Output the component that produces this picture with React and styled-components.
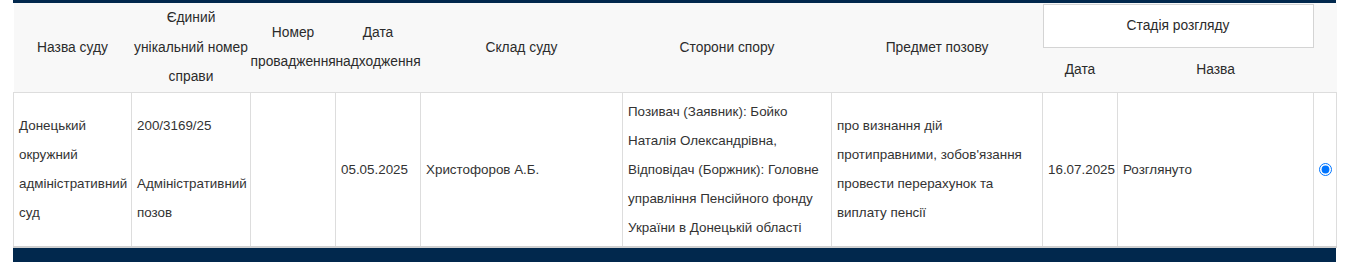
import React from "react";
import styled, { createGlobalStyle } from "styled-components";

const GlobalStyle = createGlobalStyle`
  html, body {
    margin: 0;
    padding: 0;
    background: #fff;
  }
  body {
    font-family: "Liberation Sans", Arial, Helvetica, sans-serif;
    font-size: 13.4px;
    color: #333;
  }
`;

const NAVY = "#01284d";

const Page = styled.div`
  padding: 0 24px 0 13px;
`;

const Panel = styled.div`
  width: 1323px;
  border-top: 3px solid ${NAVY};
`;

const Table = styled.table`
  width: 100%;
  table-layout: fixed;
  border-collapse: collapse;
  border-spacing: 0;
`;

const Head = styled.thead`
  background: #f8f8f8;
`;

const HeadRow = styled.tr`
  height: 44px;
`;

const Th = styled.th`
  font-weight: normal;
  font-size: 13.8px;
  color: #2b2b2b;
  text-align: center;
  vertical-align: middle;
  line-height: 29.5px;
  padding: 0;
  white-space: ${(p) => (p.$nowrap ? "nowrap" : "normal")};
  border-bottom: ${(p) => (p.$last ? "1px solid #ddd" : "none")};
`;

const StageBox = styled.div`
  margin-top: 1px;
  height: 44px;
  box-sizing: border-box;
  background: #fff;
  border: 1px solid #d4d4d4;
  line-height: 42px;
`;

const BodyRow = styled.tr`
  background: #fff;
`;

const Td = styled.td`
  border: 1px solid #ddd;
  border-bottom: 2px solid #d0d0d0;
  padding: ${(p) => (p.$center ? "4px 0" : "4px 3px 4px 5px")};
  line-height: 29px;
  vertical-align: middle;
  text-align: ${(p) => (p.$center ? "center" : "left")};
  white-space: ${(p) => (p.$nowrap ? "nowrap" : "normal")};
  color: #333;
`;

const Radio = styled.input`
  margin: 0;
  width: 13px;
  height: 13px;
  vertical-align: middle;
`;

const Footer = styled.div`
  height: 40px;
  background: ${NAVY};
`;

const widths = [118, 119, 85, 85, 202, 209, 211, 75, 196, 23];

export default function App() {
  return (
    <Page>
      <GlobalStyle />
      <Panel>
        <Table>
          <colgroup>
            {widths.map((w, i) => (
              <col key={i} style={{ width: w }} />
            ))}
          </colgroup>
          <Head>
            <HeadRow>
              <Th rowSpan={2} $last>Назва суду</Th>
              <Th rowSpan={2} $last>
                Єдиний
                <br />
                унікальний номер
                <br />
                справи
              </Th>
              <Th rowSpan={2} $last $nowrap>
                Номер
                <br />
                провадження
              </Th>
              <Th rowSpan={2} $last $nowrap>
                Дата
                <br />
                надходження
              </Th>
              <Th rowSpan={2} $last>Склад суду</Th>
              <Th rowSpan={2} $last>Сторони спору</Th>
              <Th rowSpan={2} $last>Предмет позову</Th>
              <Th colSpan={2}>
                <StageBox>Стадія розгляду</StageBox>
              </Th>
              <Th rowSpan={2} $last></Th>
            </HeadRow>
            <HeadRow>
              <Th $last>Дата</Th>
              <Th $last>Назва</Th>
            </HeadRow>
          </Head>
          <tbody>
            <BodyRow>
              <Td>Донецький окружний адміністративний суд</Td>
              <Td>
                200/3169/25
                <br />
                <br />
                Адміністративний позов
              </Td>
              <Td></Td>
              <Td $nowrap>05.05.2025</Td>
              <Td>Христофоров А.Б.</Td>
              <Td>
                Позивач (Заявник): Бойко Наталія Олександрівна, Відповідач
                (Боржник): Головне управління Пенсійного фонду України в
                Донецькій області
              </Td>
              <Td>
                про визнання дій протиправними, зобов'язання провести
                перерахунок та виплату пенсії
              </Td>
              <Td $nowrap>16.07.2025</Td>
              <Td>Розглянуто</Td>
              <Td $center>
                <Radio type="radio" name="case" defaultChecked />
              </Td>
            </BodyRow>
          </tbody>
        </Table>
        <Footer />
      </Panel>
    </Page>
  );
}
